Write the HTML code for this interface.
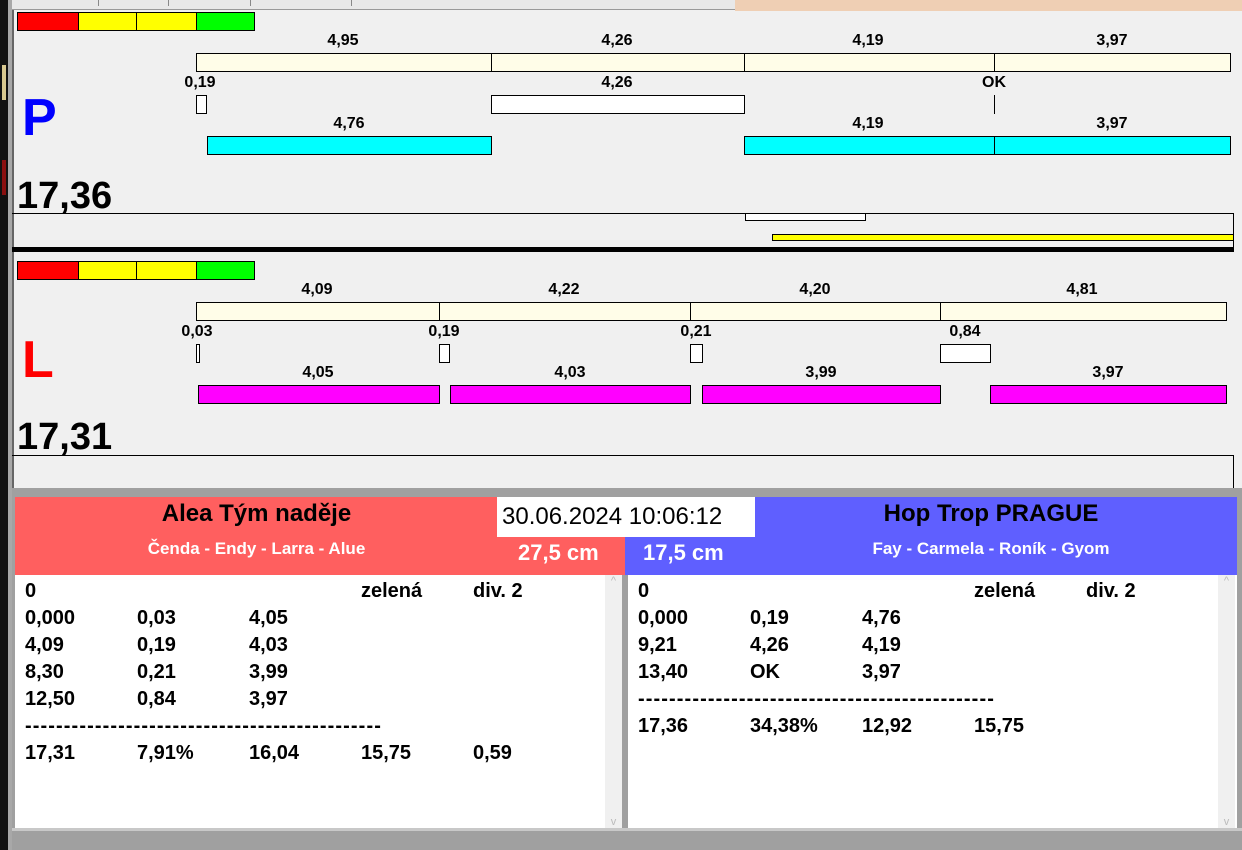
<!DOCTYPE html>
<html><head><meta charset="utf-8"><style>
*{margin:0;padding:0;box-sizing:border-box}
body{width:1242px;height:850px;position:relative;overflow:hidden;background:#f0f0f0;font-family:"Liberation Sans",Arial,sans-serif;font-weight:bold;color:#000}
.a{position:absolute}
.b{position:absolute;border:1px solid #000}
.l{position:absolute;font-size:16px;transform:translateX(-50%);line-height:17px}
.t{position:absolute;font-size:20px;line-height:27px;white-space:pre}
</style></head><body>
<div class="a" style="left:0;top:0;width:8px;height:850px;background:#111"></div>
<div class="a" style="left:8px;top:0;width:4px;height:850px;background:#a8a8a8"></div>
<div class="a" style="left:2px;top:65px;width:4px;height:35px;background:#d8c890"></div>
<div class="a" style="left:2px;top:160px;width:4px;height:35px;background:#8a1010"></div>
<div class="a" style="left:12px;top:0;width:723px;height:10px;background:#e8e8e8;border-bottom:1px solid #999"></div>
<div class="a" style="left:98px;top:0;width:1px;height:6px;background:#888"></div>
<div class="a" style="left:168px;top:0;width:1px;height:6px;background:#888"></div>
<div class="a" style="left:250px;top:0;width:1px;height:6px;background:#888"></div>
<div class="a" style="left:351px;top:0;width:1px;height:6px;background:#888"></div>
<div class="a" style="left:735px;top:0;width:507px;height:11px;background:#efcfb4"></div>
<div class="a" style="left:12px;top:10px;width:2px;height:480px;background:#666"></div>

<div class="b" style="left:17px;top:12px;width:62px;height:19px;background:#f00"></div>
<div class="b" style="left:78px;top:12px;width:59px;height:19px;background:#ff0"></div>
<div class="b" style="left:136px;top:12px;width:61px;height:19px;background:#ff0"></div>
<div class="b" style="left:196px;top:12px;width:59px;height:19px;background:#0f0"></div>
<div class="a" style="left:22px;top:88px;font-size:52px;color:#00f;line-height:60px">P</div>
<div class="a" style="left:17px;top:174px;font-size:38px;line-height:44px">17,36</div>

<div class="b" style="left:196px;top:53px;width:296px;height:19px;background:#fffde8"></div>
<div class="b" style="left:491px;top:53px;width:254px;height:19px;background:#fffde8"></div>
<div class="b" style="left:744px;top:53px;width:251px;height:19px;background:#fffde8"></div>
<div class="b" style="left:994px;top:53px;width:237px;height:19px;background:#fffde8"></div>
<div class="l" style="left:343px;top:32px">4,95</div>
<div class="l" style="left:617px;top:32px">4,26</div>
<div class="l" style="left:868px;top:32px">4,19</div>
<div class="l" style="left:1112px;top:32px">3,97</div>
<div class="l" style="left:200px;top:74px">0,19</div>
<div class="l" style="left:617px;top:74px">4,26</div>
<div class="l" style="left:994px;top:74px">OK</div>
<div class="b" style="left:196px;top:95px;width:11px;height:19px;background:#fff"></div>
<div class="b" style="left:491px;top:95px;width:254px;height:19px;background:#fff"></div>
<div class="a" style="left:994px;top:95px;width:1px;height:19px;background:#000"></div>
<div class="l" style="left:349px;top:115px">4,76</div>
<div class="l" style="left:868px;top:115px">4,19</div>
<div class="l" style="left:1112px;top:115px">3,97</div>
<div class="b" style="left:207px;top:136px;width:285px;height:19px;background:#0ff"></div>
<div class="b" style="left:744px;top:136px;width:251px;height:19px;background:#0ff"></div>
<div class="b" style="left:994px;top:136px;width:237px;height:19px;background:#0ff"></div>
<div class="a" style="left:12px;top:213px;width:1222px;height:1px;background:#000"></div>
<div class="a" style="left:1233px;top:213px;width:1px;height:35px;background:#000"></div>
<div class="b" style="left:745px;top:213px;width:121px;height:8px;background:#fff"></div>
<div class="b" style="left:772px;top:234px;width:462px;height:7px;background:#ff0"></div>
<div class="a" style="left:12px;top:247px;width:1222px;height:5px;background:#000"></div>

<div class="b" style="left:17px;top:261px;width:62px;height:19px;background:#f00"></div>
<div class="b" style="left:78px;top:261px;width:59px;height:19px;background:#ff0"></div>
<div class="b" style="left:136px;top:261px;width:61px;height:19px;background:#ff0"></div>
<div class="b" style="left:196px;top:261px;width:59px;height:19px;background:#0f0"></div>
<div class="a" style="left:22px;top:330px;font-size:52px;color:#f00;line-height:60px">L</div>
<div class="a" style="left:17px;top:415px;font-size:38px;line-height:44px">17,31</div>
<div class="b" style="left:196px;top:302px;width:244px;height:19px;background:#fffde8"></div>
<div class="b" style="left:439px;top:302px;width:252px;height:19px;background:#fffde8"></div>
<div class="b" style="left:690px;top:302px;width:251px;height:19px;background:#fffde8"></div>
<div class="b" style="left:940px;top:302px;width:287px;height:19px;background:#fffde8"></div>
<div class="l" style="left:317px;top:281px">4,09</div>
<div class="l" style="left:564px;top:281px">4,22</div>
<div class="l" style="left:815px;top:281px">4,20</div>
<div class="l" style="left:1082px;top:281px">4,81</div>
<div class="l" style="left:197px;top:323px">0,03</div>
<div class="l" style="left:444px;top:323px">0,19</div>
<div class="l" style="left:696px;top:323px">0,21</div>
<div class="l" style="left:965px;top:323px">0,84</div>
<div class="b" style="left:196px;top:344px;width:4px;height:19px;background:#fff"></div>
<div class="b" style="left:439px;top:344px;width:11px;height:19px;background:#fff"></div>
<div class="b" style="left:690px;top:344px;width:13px;height:19px;background:#fff"></div>
<div class="b" style="left:940px;top:344px;width:51px;height:19px;background:#fff"></div>
<div class="l" style="left:318px;top:364px">4,05</div>
<div class="l" style="left:570px;top:364px">4,03</div>
<div class="l" style="left:821px;top:364px">3,99</div>
<div class="l" style="left:1108px;top:364px">3,97</div>
<div class="b" style="left:198px;top:385px;width:242px;height:19px;background:#f0f"></div>
<div class="b" style="left:450px;top:385px;width:241px;height:19px;background:#f0f"></div>
<div class="b" style="left:702px;top:385px;width:239px;height:19px;background:#f0f"></div>
<div class="b" style="left:990px;top:385px;width:237px;height:19px;background:#f0f"></div>
<div class="a" style="left:12px;top:455px;width:1222px;height:1px;background:#000"></div>
<div class="a" style="left:1233px;top:455px;width:1px;height:33px;background:#000"></div>

<div class="a" style="left:12px;top:488px;width:1230px;height:362px;background:#a0a0a0"></div>
<div class="a" style="left:15px;top:497px;width:610px;height:78px;background:#ff5f5f"></div>
<div class="a" style="left:625px;top:497px;width:612px;height:78px;background:#5f5fff"></div>
<div class="a" style="left:15px;top:498px;width:483px;text-align:center;font-size:24px;line-height:32px">Alea Tým naděje</div>
<div class="a" style="left:15px;top:537px;width:483px;text-align:center;font-size:17px;line-height:24px;color:#fff">Čenda - Endy - Larra - Alue</div>
<div class="a" style="left:497px;top:497px;width:258px;height:40px;background:#fff;font-weight:normal;font-size:24px;line-height:26px;padding:0 0 0 5px;display:flex;align-items:center">30.06.2024 10:06:12</div>
<div class="a" style="left:518px;top:539px;font-size:22px;line-height:28px;color:#fff">27,5 cm</div>
<div class="a" style="left:643px;top:539px;font-size:22px;line-height:28px;color:#fff">17,5 cm</div>
<div class="a" style="left:755px;top:498px;width:472px;text-align:center;font-size:24px;line-height:32px">Hop Trop PRAGUE</div>
<div class="a" style="left:755px;top:537px;width:472px;text-align:center;font-size:17px;line-height:24px;color:#fff">Fay - Carmela - Roník - Gyom</div>

<div class="a" style="left:15px;top:575px;width:607px;height:253px;background:#fff"></div>
<div class="a" style="left:605px;top:575px;width:17px;height:253px;background:#f0f0f0;color:#bbb;font-size:11px;text-align:center;font-weight:normal">^<div style="position:absolute;bottom:0;width:17px">v</div></div>
<div class="a" style="left:628px;top:575px;width:609px;height:253px;background:#fff"></div>
<div class="a" style="left:1218px;top:575px;width:17px;height:253px;background:#f0f0f0;color:#bbb;font-size:11px;text-align:center;font-weight:normal">^<div style="position:absolute;bottom:0;width:17px">v</div></div>
<div class="a" style="left:12px;top:828px;width:1230px;height:3px;background:#c8c8c8"></div>

<div class="t" style="left:25px;top:578px">0</div>
<div class="t" style="left:361px;top:578px">zelená</div>
<div class="t" style="left:473px;top:578px">div. 2</div>
<div class="t" style="left:25px;top:605px">0,000</div><div class="t" style="left:137px;top:605px">0,03</div><div class="t" style="left:249px;top:605px">4,05</div>
<div class="t" style="left:25px;top:632px">4,09</div><div class="t" style="left:137px;top:632px">0,19</div><div class="t" style="left:249px;top:632px">4,03</div>
<div class="t" style="left:25px;top:659px">8,30</div><div class="t" style="left:137px;top:659px">0,21</div><div class="t" style="left:249px;top:659px">3,99</div>
<div class="t" style="left:25px;top:686px">12,50</div><div class="t" style="left:137px;top:686px">0,84</div><div class="t" style="left:249px;top:686px">3,97</div>
<div class="t" style="left:25px;top:713px;letter-spacing:1.1px">----------------------------------------------</div>
<div class="t" style="left:25px;top:740px">17,31</div><div class="t" style="left:137px;top:740px">7,91%</div><div class="t" style="left:249px;top:740px">16,04</div><div class="t" style="left:361px;top:740px">15,75</div><div class="t" style="left:473px;top:740px">0,59</div>

<div class="t" style="left:638px;top:578px">0</div>
<div class="t" style="left:974px;top:578px">zelená</div>
<div class="t" style="left:1086px;top:578px">div. 2</div>
<div class="t" style="left:638px;top:605px">0,000</div><div class="t" style="left:750px;top:605px">0,19</div><div class="t" style="left:862px;top:605px">4,76</div>
<div class="t" style="left:638px;top:632px">9,21</div><div class="t" style="left:750px;top:632px">4,26</div><div class="t" style="left:862px;top:632px">4,19</div>
<div class="t" style="left:638px;top:659px">13,40</div><div class="t" style="left:750px;top:659px">OK</div><div class="t" style="left:862px;top:659px">3,97</div>
<div class="t" style="left:638px;top:686px;letter-spacing:1.1px">----------------------------------------------</div>
<div class="t" style="left:638px;top:713px">17,36</div><div class="t" style="left:750px;top:713px">34,38%</div><div class="t" style="left:862px;top:713px">12,92</div><div class="t" style="left:974px;top:713px">15,75</div>
</body></html>
